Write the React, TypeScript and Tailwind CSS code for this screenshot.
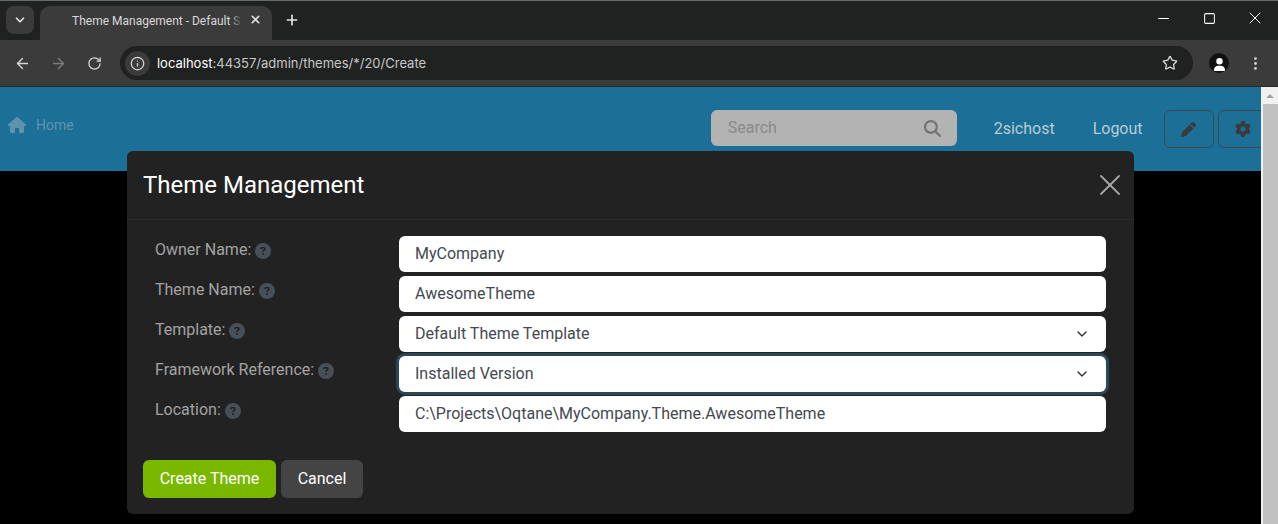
import React from 'react';
import { ArrowLeft, ArrowRight, RotateCw, Info, Star, ChevronDown, X, Plus, Minus, Square, EllipsisVertical } from 'lucide-react';
import { FaHouse, FaMagnifyingGlass, FaPen, FaGear, FaCircleQuestion, FaUser } from 'react-icons/fa6';

const fields = [
  { label: 'Owner Name:', value: 'MyCompany' },
  { label: 'Theme Name:', value: 'AwesomeTheme' },
  { label: 'Template:', value: 'Default Theme Template', select: true },
  { label: 'Framework Reference:', value: 'Installed Version', select: true, focus: true },
  { label: 'Location:', value: 'C:\\Projects\\Oqtane\\MyCompany.Theme.AwesomeTheme' },
];

const BrowserChrome: React.FC = () => (
  <div className="font-['Inter','Noto_Sans',sans-serif]">
    <div className="h-px bg-[#6b6b6b]" />
    {/* Tab strip */}
    <div className="h-[39px] bg-[#202121] flex items-end pl-[6px] text-[#e3e3e3]">
      <div className="w-[28px] h-[28px] mb-[6px] rounded-lg bg-[#3b3b3b] flex items-center justify-center">
        <ChevronDown size={14} strokeWidth={3} />
      </div>
      <div className="relative ml-[6px] w-[232px] h-[34px] rounded-t-[10px] bg-[#3b3b3b] flex items-center pl-[32px] pb-[4px]">
        <span className="text-xs whitespace-nowrap font-['Roboto',sans-serif] text-[#d8d8d8]">Theme Management - Default S</span>
        <div className="absolute left-[190px] top-0 h-full w-[12px] bg-gradient-to-r from-transparent to-[#3b3b3b]" />
        <X size={13} strokeWidth={3} className="absolute left-[209px] top-[7px]" />
      </div>
      <Plus size={16} strokeWidth={2.5} className="ml-[12px] mb-[12px]" />
      <div className="ml-auto flex items-center mb-[12px] text-white">
        <Minus size={17} strokeWidth={1.4} className="mr-[31px]" />
        <Square size={13} strokeWidth={1.85} className="mr-[29px]" />
        <X size={20} strokeWidth={1.2} className="mr-[13px]" />
      </div>
    </div>
    {/* Toolbar */}
    <div className="h-[47px] bg-[#3b3b3b] border-b border-[#2a2a2a] flex items-center pl-[14px] pr-[14px] text-[#d6d6d6]">
      <ArrowLeft size={17} strokeWidth={2} />
      <ArrowRight size={17} strokeWidth={2} className="ml-[19px] text-[#7b7b7b]" />
      <RotateCw size={15} strokeWidth={2} className="ml-[20px]" />
      <div className="ml-[18px] w-[1074px] h-[34px] rounded-full bg-[#202121] flex items-center pl-[5px] pr-[15px]">
        <div className="w-[25px] h-[25px] rounded-full bg-[#3b3b3b] flex items-center justify-center">
          <Info size={15} strokeWidth={2} />
        </div>
        <span className="ml-[7px] pt-[1px] text-[13px] whitespace-nowrap text-[#c7c7c7]">
          <span className="text-white">localhost</span>:44357/admin/themes/*/20/Create
        </span>
        <Star size={16} strokeWidth={2} className="ml-auto" />
      </div>
      <div className="ml-[16px] w-[20px] h-[20px] rounded-full bg-[#111] flex items-end justify-center overflow-hidden">
        <FaUser size={13} className="text-white mb-[2px]" />
      </div>
      <EllipsisVertical size={17} strokeWidth={2} className="ml-[18px]" />
    </div>
  </div>
);

const PageHeader: React.FC = () => (
  <div className="h-[84px] bg-[#1c6f97] flex items-start pl-[8px] overflow-hidden">
    <div className="shrink-0 flex items-center mt-[28px] text-[#5f93ad]">
      <FaHouse size={18} />
      <span className="ml-[10px] text-sm">Home</span>
    </div>
    <div className="shrink-0 ml-[637px] mt-[23px] w-[246px] h-[36px] rounded-md bg-[#b3b3b3] flex items-center pl-[17px] pr-[16px] text-[#8a8a8a]">
      <span>Search</span>
      <FaMagnifyingGlass size={17} className="ml-auto text-[#737373]" />
    </div>
    <span className="shrink-0 ml-[37px] mt-[30px] text-[#b9ccd4]">2sichost</span>
    <span className="shrink-0 ml-[38px] mt-[30px] text-[#b9ccd4]">Logout</span>
    <div className="ml-[21px] mt-[23px] shrink-0 w-[50px] h-[38px] rounded-md border border-[#3c4a50] flex items-center justify-center text-[#3a3a3a]">
      <FaPen size={15} />
    </div>
    <div className="ml-[4px] mt-[23px] shrink-0 w-[50px] h-[38px] rounded-md border border-[#3c4a50] flex items-center justify-center text-[#3a3a3a]">
      <FaGear size={16} />
    </div>
  </div>
);

const Field: React.FC<{ label: string; value: string; select?: boolean; focus?: boolean }> = ({ label, value, select, focus }) => (
  <div className="flex items-start">
    <div className="w-[256px] pl-[12px] flex items-center h-[28px] text-[#a3a3a3]">
      <span>{label}</span>
      <FaCircleQuestion size={16} className="ml-[4px] mt-[2px] text-[#475059]" />
    </div>
    <div className={`w-[707px] h-[36px] bg-white rounded-md flex items-center pl-[16px] pr-[16px] text-[#444950] ${focus ? 'ring-[3px] ring-[#28485a]' : ''}`}>
      <span>{value}</span>
      {select && <ChevronDown size={16} strokeWidth={2} className="ml-auto text-[#2b2f33]" />}
    </div>
  </div>
);

const App: React.FC = () => (
  <div className="relative w-[1278px] h-[524px] overflow-hidden bg-black font-['Roboto',sans-serif] text-base">
    <BrowserChrome />
    <div className="flex h-[437px]">
      <div className="flex-1 min-w-0 bg-black">
        <PageHeader />
      </div>
      {/* Scrollbar */}
      <div className="w-[17px] bg-[#f1f1f1] flex flex-col items-center">
        <div className="mt-[7px] w-0 h-0 border-l-[4px] border-r-[4px] border-b-[4px] border-l-transparent border-r-transparent border-b-[#a3a3a3]" />
        <div className="mt-[6px] ml-[2px] w-[15px] flex-1 bg-[#c1c1c1]" />
      </div>
    </div>

    {/* Modal */}
    <div className="absolute left-[127px] top-[151px] w-[1007px] h-[363px] rounded-md bg-[#222222]">
      <div className="h-[69px] border-b border-[#2b2b2b] flex items-center pl-[16px] pr-[6px]">
        <h2 className="text-2xl font-normal text-white">Theme Management</h2>
        <X size={36} strokeWidth={1.2} className="ml-auto text-[#a8a8a8]" />
      </div>
      <div className="pl-[16px] pt-[16px] flex flex-col gap-[4px]">
        {fields.map((f) => (
          <Field key={f.label} {...f} />
        ))}
      </div>
      <div className="pl-[16px] mt-[28px] flex gap-[5px]">
        <button className="w-[133px] h-[38px] rounded-md bg-[#7ab800] text-white font-[450]">Create Theme</button>
        <button className="w-[82px] h-[38px] rounded-md bg-[#444444] text-white font-[450]">Cancel</button>
      </div>
    </div>
  </div>
);

export default App;
